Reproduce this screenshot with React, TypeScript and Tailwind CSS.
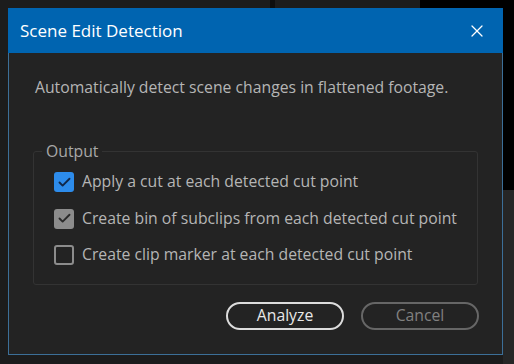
import React from 'react';
import { X, Check } from 'lucide-react';

export default function App() {
  const font = { fontFamily: '"Open Sans", "Noto Sans", sans-serif' };

  return (
    <div className="relative w-[514px] h-[364px] bg-[#1c1c1c] overflow-hidden" style={font}>
      {/* background strips */}
      <div className="absolute left-[270px] top-0 w-[5px] h-[8px] bg-[#0e0e0e]" />
      <div className="absolute left-[420px] top-0 w-[94px] h-[8px] bg-black" />
      <div className="absolute left-[503px] top-0 w-[11px] h-[190px] bg-black" />
      <div className="absolute left-[503px] top-[190px] w-[11px] h-[174px] bg-[#262626]" />

      {/* dialog */}
      <div className="absolute left-[8px] top-[8px] w-[495px] h-[347px] border border-[#3c6f98] bg-[#232323] flex flex-col">
        <div className="h-[45px] shrink-0 bg-[#0064b0] flex items-center justify-between pl-[12px] pr-[16px] -mx-px -mt-px">
          <span className="text-[17px] text-white">Scene Edit Detection</span>
          <X className="w-[20px] h-[20px] text-white" strokeWidth={1.5} />
        </div>

        <div className="px-[26px] pt-[23px]">
          <p className="text-[15.75px] text-[#b5b5b5] leading-[22px]">
            Automatically detect scene changes in flattened footage.
          </p>
        </div>

        <fieldset className="mx-[24px] mt-[44px] h-[143px] shrink-0 border border-[#333333] rounded-[3px] px-[20px]">
          <legend className="text-[15.75px] text-[#a8a8a8] px-[4px] -ml-[12px] leading-[18px]">Output</legend>
          <div className="flex flex-col gap-[16.5px] pt-[12px]">
            <Row label="Apply a cut at each detected cut point" state="blue" />
            <Row label="Create bin of subclips from each detected cut point" state="grey" />
            <Row label="Create clip marker at each detected cut point" state="off" />
          </div>
        </fieldset>

        <div className="flex justify-end gap-[17px] pr-[23px] mt-[17px]">
          <button className="w-[118px] h-[28px] rounded-full border-2 border-[#dcdcdc] text-[15.75px] leading-none text-[#e8e8e8]">
            Analyze
          </button>
          <button className="w-[118px] h-[28px] rounded-full border-2 border-[#666666] text-[15.75px] leading-none text-[#808080]">
            Cancel
          </button>
        </div>
      </div>
    </div>
  );
}

function Row({ label, state }: { label: string; state: 'blue' | 'grey' | 'off' }) {
  return (
    <div className="flex items-center gap-[8px] h-[20px]">
      {state === 'blue' && (
        <span className="w-[20px] h-[20px] shrink-0 rounded-[3px] bg-[#2d8ceb] flex items-center justify-center">
          <Check className="w-[15px] h-[15px] text-[#10284a]" strokeWidth={3} />
        </span>
      )}
      {state === 'grey' && (
        <span className="w-[20px] h-[20px] shrink-0 rounded-[3px] bg-[#8c8c8c] flex items-center justify-center">
          <Check className="w-[15px] h-[15px] text-[#2a2a2a]" strokeWidth={3} />
        </span>
      )}
      {state === 'off' && (
        <span className="w-[20px] h-[20px] shrink-0 rounded-[3px] border-2 border-[#8c8c8c]" />
      )}
      <span className="text-[15.75px] text-[#b5b5b5] whitespace-nowrap">{label}</span>
    </div>
  );
}
